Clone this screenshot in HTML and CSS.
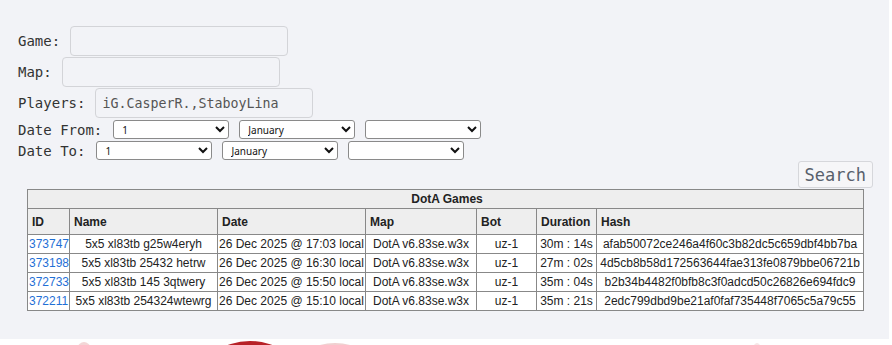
FILE: index.html
```html
<!DOCTYPE html>
<html lang="en">
<head>
    <meta charset="UTF-8">
    <meta name="viewport" content="width=device-width, initial-scale=1.0">
    <title>DotA Games - Search</title>
    <link rel="stylesheet" href="styles.css">
</head>
<body>
    <div class="panel">
        <!-- Search form -->
        <form class="search-form">
            <div class="field">
                <label for="game">Game:</label>
                <input type="text" id="game">
            </div>
            <div class="field">
                <label for="map">Map:</label>
                <input type="text" id="map">
            </div>
            <div class="field">
                <label for="players">Players:</label>
                <input type="text" id="players" value="iG.CasperR.,StaboyLina">
            </div>
            <div class="field date-row">
                <label>Date From:</label>
                <select><option>1</option></select>
                <select><option>January</option></select>
                <select><option></option></select>
            </div>
            <div class="field date-row">
                <label>Date To:</label>
                <select><option>1</option></select>
                <select><option>January</option></select>
                <select><option></option></select>
            </div>
            <button type="button" class="search-button">Search</button>
        </form>

        <!-- Results -->
        <table class="games">
            <colgroup>
                <col class="col-id">
                <col class="col-name">
                <col class="col-date">
                <col class="col-map">
                <col class="col-bot">
                <col class="col-duration">
                <col class="col-hash">
            </colgroup>
            <tr>
                <th colspan="7" class="caption">DotA Games</th>
            </tr>
            <tr class="head">
                <th>ID</th>
                <th>Name</th>
                <th>Date</th>
                <th>Map</th>
                <th>Bot</th>
                <th>Duration</th>
                <th>Hash</th>
            </tr>
            <tr>
                <td><a href="#">373747</a></td>
                <td>5x5 xl83tb g25w4eryh</td>
                <td>26 Dec 2025 @ 17:03 local</td>
                <td>DotA v6.83se.w3x</td>
                <td>uz-1</td>
                <td>30m : 14s</td>
                <td>afab50072ce246a4f60c3b82dc5c659dbf4bb7ba</td>
            </tr>
            <tr>
                <td><a href="#">373198</a></td>
                <td>5x5 xl83tb 25432 hetrw</td>
                <td>26 Dec 2025 @ 16:30 local</td>
                <td>DotA v6.83se.w3x</td>
                <td>uz-1</td>
                <td>27m : 02s</td>
                <td>4d5cb8b58d172563644fae313fe0879bbe06721b</td>
            </tr>
            <tr>
                <td><a href="#">372733</a></td>
                <td>5x5 xl83tb 145 3qtwery</td>
                <td>26 Dec 2025 @ 15:50 local</td>
                <td>DotA v6.83se.w3x</td>
                <td>uz-1</td>
                <td>35m : 04s</td>
                <td>b2b34b4482f0bfb8c3f0adcd50c26826e694fdc9</td>
            </tr>
            <tr>
                <td><a href="#">372211</a></td>
                <td>5x5 xl83tb 254324wtewrg</td>
                <td>26 Dec 2025 @ 15:10 local</td>
                <td>DotA v6.83se.w3x</td>
                <td>uz-1</td>
                <td>35m : 21s</td>
                <td>2edc799dbd9be21af0faf735448f7065c5a79c55</td>
            </tr>
        </table>
    </div>

    <!-- top of the footer logo -->
    <div class="footer">
        <svg width="892" height="6" viewBox="0 0 892 6">
            <ellipse cx="84" cy="30" rx="12" ry="27" fill="#f3d6d6"/>
            <ellipse cx="335" cy="34" rx="42" ry="30" fill="#f0d0d0"/>
            <ellipse cx="250" cy="40" rx="50" ry="38" fill="#b82228"/>
            <ellipse cx="757" cy="32" rx="8" ry="28" fill="#f6e6e6"/>
        </svg>
    </div>
</body>
</html>
```

FILE: styles.css
```css
body {
    margin: 0;
    padding: 0;
    background-color: #fff;
    font-family: 'DejaVu Sans Mono', 'Liberation Mono', monospace;
    color: #222;
}

.panel {
    width: 889px;
    box-sizing: border-box;
    padding: 26px 16px 28px 18px;
    background-color: #f2f3f7;
}

/* Search form */
.field {
    display: flex;
    align-items: center;
    margin-bottom: 1px;
    font-size: 14px;
}

.field label {
    margin-right: 10px;
    color: #333;
}

.field input {
    width: 218px;
    height: 30px;
    box-sizing: border-box;
    padding: 0 6px;
    border: 1px solid #d3d4d8;
    border-radius: 4px;
    background-color: #f2f3f7;
    font-family: 'DejaVu Sans Mono', 'Liberation Mono', monospace;
    font-size: 13.3px;
    color: #555;
}

.date-row {
    margin-top: 2px;
    margin-bottom: 0;
}

.date-row label {
    margin-right: 11px;
}

.date-row select {
    width: 116px;
    height: 19px;
    margin-right: 10px;
    padding: 0 4px;
    border: 1px solid #8a8a8a;
    border-radius: 3px;
    background-color: #fff;
    font-family: 'Noto Sans', 'Liberation Sans', sans-serif;
    font-size: 10px;
    color: #111;
}

.search-button {
    display: block;
    margin: 1px 0 1px auto;
    height: 27px;
    padding: 0 6px;
    border: 1px solid #d6d7db;
    border-radius: 3px;
    background-color: #f6f6f8;
    font-family: 'DejaVu Sans Mono', 'Liberation Mono', monospace;
    font-size: 17px;
    color: #58606c;
    cursor: pointer;
}

/* Results table */
.games {
    width: 837px;
    margin: 0 auto 0 9px;
    table-layout: fixed;
    border-collapse: collapse;
    border: 1px solid #888;
    font-family: 'Liberation Sans', Arial, sans-serif;
    font-size: 12px;
    color: #222;
}

.col-id { width: 42px; }
.col-name { width: 148px; }
.col-date { width: 148px; }
.col-map { width: 111px; }
.col-bot { width: 60px; }
.col-duration { width: 60px; }
.col-hash { width: 267px; }

.games th,
.games td {
    border: 1px solid #888;
    padding: 0 1px;
    white-space: nowrap;
    overflow: hidden;
}

.games th {
    background-color: #eee;
    text-align: left;
    padding-left: 4px;
}

.games .caption {
    height: 18px;
    text-align: center;
}

.games .head th {
    height: 25px;
}

.games td {
    height: 18px;
    background-color: #fff;
    text-align: center;
}

.games a {
    color: #1f70d6;
    text-decoration: none;
}

.footer {
    height: 6px;
    line-height: 0;
}
```
